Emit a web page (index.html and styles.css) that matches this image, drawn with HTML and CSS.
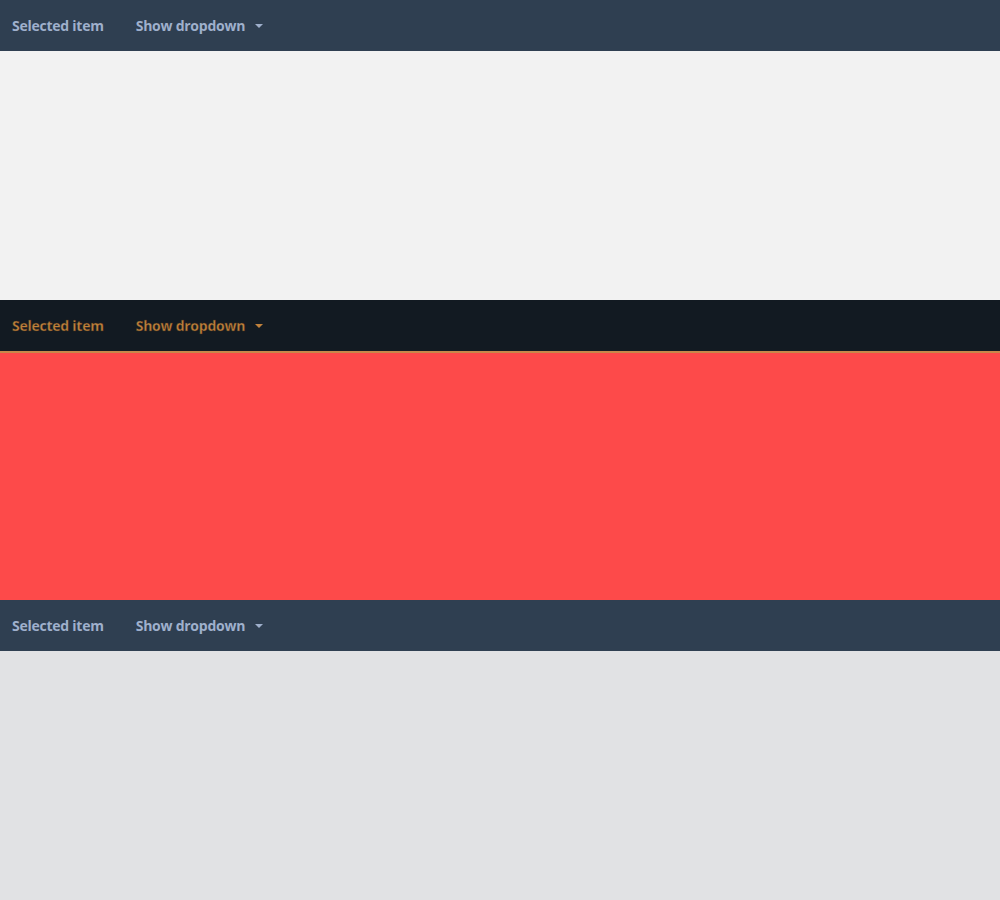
FILE: index.html
```html
<!DOCTYPE html>
<html>
<head>
<meta charset="utf-8">
<link rel="stylesheet" href="styles.css">
</head>
<body>
<section class="panel panel-light">
  <nav class="bar">
    <span class="item">Selected item</span>
    <span class="item dropdown">Show dropdown <span class="caret"></span></span>
  </nav>
  <div class="content"></div>
</section>
<section class="panel panel-red">
  <nav class="bar bar-dark">
    <span class="item">Selected item</span>
    <span class="item dropdown">Show dropdown <span class="caret"></span></span>
  </nav>
  <div class="content"></div>
</section>
<section class="panel panel-gray">
  <nav class="bar">
    <span class="item">Selected item</span>
    <span class="item dropdown">Show dropdown <span class="caret"></span></span>
  </nav>
  <div class="content"></div>
</section>
</body>
</html>
```
FILE: styles.css
```css
html, body {
  margin: 0;
  padding: 0;
}
body {
  font-family: "Open Sans", "Noto Sans", sans-serif;
}
.panel {
  height: 300px;
  display: flex;
  flex-direction: column;
}
.bar {
  height: 51px;
  flex: none;
  display: flex;
  align-items: center;
  gap: 32px;
  padding-left: 12px;
  background: #2f3f51;
  color: #9fb0cc;
  font-size: 14px;
  font-weight: 700;
  letter-spacing: -0.25px;
  box-sizing: border-box;
}
.item {
  display: flex;
  align-items: center;
  white-space: pre;
}
.caret {
  display: inline-block;
  width: 0;
  height: 0;
  margin-left: 7px;
  margin-top: 1px;
  border-left: 4px solid transparent;
  border-right: 4px solid transparent;
  border-top: 4px solid currentColor;
}
.content {
  flex: 1;
}
.panel-light .content { background: #f2f2f2; }
.panel-gray .content { background: #e1e2e4; }
.panel-red .content { background: #fd4a4a; }
.bar-dark {
  height: 53px;
  background: #121a22;
  color: #c1823c;
  border-bottom: 2px solid #c8884a;
  -webkit-text-stroke: 0.4px #3a2a1a;
}
.bar-dark .caret {
  border-top-color: #c1823c;
}
```
